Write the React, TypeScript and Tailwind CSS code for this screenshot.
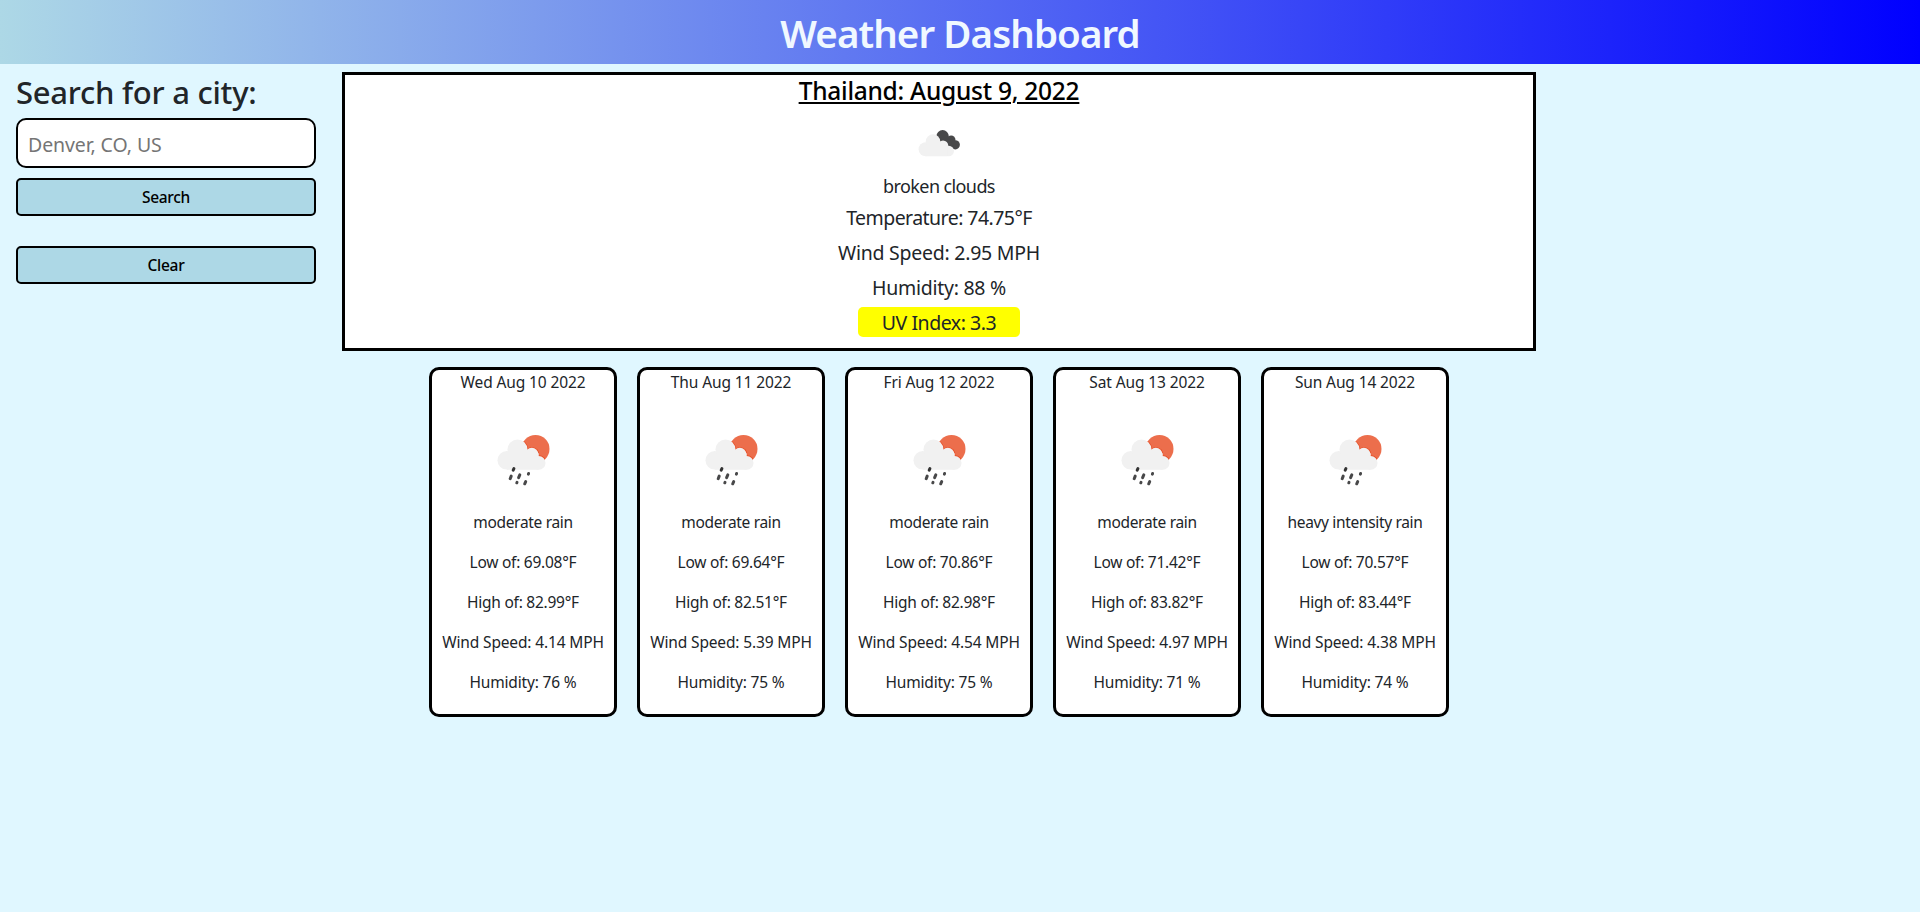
type Day = {
  date: string;
  description: string;
  low: string;
  high: string;
  wind: string;
  humidity: string;
};

const forecast: Day[] = [
  { date: 'Wed Aug 10 2022', description: 'moderate rain', low: '69.08', high: '82.99', wind: '4.14', humidity: '76' },
  { date: 'Thu Aug 11 2022', description: 'moderate rain', low: '69.64', high: '82.51', wind: '5.39', humidity: '75' },
  { date: 'Fri Aug 12 2022', description: 'moderate rain', low: '70.86', high: '82.98', wind: '4.54', humidity: '75' },
  { date: 'Sat Aug 13 2022', description: 'moderate rain', low: '71.42', high: '83.82', wind: '4.97', humidity: '71' },
  { date: 'Sun Aug 14 2022', description: 'heavy intensity rain', low: '70.57', high: '83.44', wind: '4.38', humidity: '74' },
];

function BrokenCloudsIcon() {
  return (
    <svg className="mt-2.5 h-[55px] w-20" viewBox="-1 -0.3 80 55" aria-hidden="true">
      <g fill="#484849">
        <circle cx="42.6" cy="21" r="6.2" />
        <circle cx="51.2" cy="24.6" r="4.3" />
        <circle cx="55.3" cy="29.5" r="4.6" />
        <path d="M37 20h10l8 13.5-5 .2-3-2.5-6-6.7z" />
      </g>
      <g fill="#f1f1f1">
        <circle cx="25.6" cy="34" r="7" />
        <circle cx="33" cy="26.3" r="7.3" />
        <circle cx="43" cy="30.4" r="5.3" />
        <circle cx="48.7" cy="35.7" r="5.3" />
        <path d="M25.6 30h22v11h-22z" />
      </g>
    </svg>
  );
}

function RainIcon() {
  return (
    <svg className="mt-1.5 mb-2.5 h-[100px] w-[100px]" viewBox="-7.5 -20.3 100 100" aria-hidden="true">
      <defs>
        <clipPath id="sun-disc">
          <circle cx="55" cy="28.7" r="14" />
        </clipPath>
      </defs>
      <circle cx="55" cy="28.7" r="14" fill="#ec6e4c" />
      <g clipPath="url(#sun-disc)" fill="#e64d25">
        <circle cx="37" cy="29.6" r="10.8" />
        <circle cx="51.4" cy="34.2" r="7.3" />
        <circle cx="58.3" cy="42.6" r="7.7" />
      </g>
      <g fill="#f1f1f1">
        <circle cx="26.3" cy="40" r="9.3" />
        <circle cx="37" cy="29.3" r="10" />
        <circle cx="51.3" cy="34" r="6.6" />
        <circle cx="58.2" cy="42.6" r="6.8" />
        <path d="M26.3 33h31.9v16.4H26.3z" />
      </g>
      <g stroke="#484849" strokeWidth="3" strokeLinecap="round">
        <path stroke="#333" d="M33.4 48.3l-.7 1.5" />
        <path d="M30.7 55.8l-1 2.6M39.3 54.5l-1.2 2.8M48.1 53.2l-.2.6M36.5 62.1l-.2.4M45.2 61.3l-1 2.2" />
      </g>
    </svg>
  );
}

function ForecastCard({ day }: { day: Day }) {
  return (
    <article className="flex h-[350px] w-[188px] flex-col items-center rounded-[10px] border-[3px] border-black bg-white text-[15.5px] leading-6 whitespace-nowrap">
      <p className="tracking-[-0.12px]">{day.date}</p>
      <RainIcon />
      <div className="flex flex-col items-center gap-4">
        <p className="tracking-[-0.33px]">{day.description}</p>
        <p className="tracking-[-0.25px]">Low of: {day.low}°F</p>
        <p className="tracking-[-0.25px]">High of: {day.high}°F</p>
        <p className="tracking-[-0.15px]">Wind Speed: {day.wind} MPH</p>
        <p className="tracking-[-0.18px]">Humidity: {day.humidity} %</p>
      </div>
    </article>
  );
}

export default function App() {
  return (
    <div className="min-h-screen bg-[#e0f7ff] font-['Noto_Sans','Open_Sans',sans-serif] text-[#212529]">
      <header className="flex h-16 items-center justify-center bg-[linear-gradient(to_right,lightblue,blue)] pt-0.5">
        <h1 className="text-[38.5px] leading-none font-semibold tracking-[-0.92px] text-[#f0f8ff]">Weather Dashboard</h1>
      </header>

      <div className="flex pt-2">
        <aside className="ml-4 flex w-[300px] flex-col">
          <h2 className="mb-[7px] pt-px text-[31px] leading-[38px] font-medium tracking-[-0.25px]">Search for a city:</h2>
          <input
            type="text"
            placeholder="Denver, CO, US"
            className="h-[50px] rounded-[10px] border-2 border-black bg-white pt-0.5 pl-2.5 text-[19.5px] tracking-[-0.1px] placeholder:text-[#757575]"
          />
          <button className="mt-2.5 h-[38px] rounded-[5px] border-2 border-black bg-[#add8e6] pt-0.5 text-[15.5px] font-medium tracking-[-0.3px] text-black">
            Search
          </button>
          <button className="mt-[30px] h-[38px] rounded-[5px] border-2 border-black bg-[#add8e6] pt-0.5 text-[15.5px] font-medium tracking-[-0.3px] text-black">
            Clear
          </button>
        </aside>

        <main className="ml-[26px] flex w-[1194px] flex-col gap-4">
          <section className="flex h-[279px] flex-col items-center border-[3px] border-black bg-white text-[19.5px] leading-[30px]">
            <h3 className="-mb-px pt-px text-[24.5px] font-medium tracking-[-0.25px] text-black underline decoration-2 underline-offset-2">Thailand: August 9, 2022</h3>
            <BrokenCloudsIcon />
            <p className="mt-px mb-0.5 text-[18px] tracking-[-0.6px]">broken clouds</p>
            <div className="flex flex-col items-center gap-[5px]">
              <p className="tracking-[-0.55px]">Temperature: 74.75°F</p>
              <p className="tracking-[-0.25px]">Wind Speed: 2.95 MPH</p>
              <p className="tracking-[-0.26px]">Humidity: 88 %</p>
              <p className="-mt-px w-[162px] rounded-[5px] bg-[#ffff00] pt-px text-center leading-[29px] tracking-[-0.45px]">UV Index: 3.3</p>
            </div>
          </section>

          <section className="flex justify-center gap-5">
            {forecast.map((day) => (
              <ForecastCard key={day.date} day={day} />
            ))}
          </section>
        </main>
      </div>
    </div>
  );
}
